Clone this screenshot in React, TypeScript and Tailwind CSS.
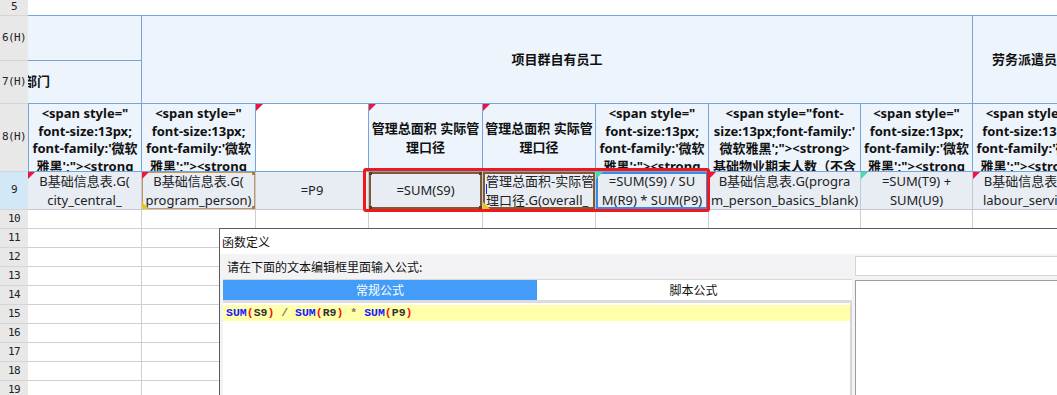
import clsx from "clsx";
import type { ReactNode } from "react";

const cellFont = "font-['Noto_Sans','Noto_Sans_CJK_SC',sans-serif]";
const rowNums = [10, 11, 12, 13, 14, 15, 16, 17, 18, 19];

const RowHead = ({ label, active }: { label: string; active?: boolean }) => (
  <div
    className={clsx(
      "flex items-center justify-center border-b border-[#d6d6d6] font-['DejaVu_Sans_Mono',monospace] text-[11px] tracking-[-0.6px] text-[#222]",
      active ? "bg-[#d2e8f6]" : "bg-[#e8e8e8]"
    )}
  >
    {label}
  </div>
);

const Tri = ({ color = "red", pos = "tl" }: { color?: "red" | "green" | "yellow"; pos?: "tl" | "bl" }) => (
  <span
    className={clsx(
      "absolute left-0 h-[7px] w-[7px]",
      pos === "tl" ? "top-0 [clip-path:polygon(0_0,100%_0,0_100%)]" : "bottom-0 [clip-path:polygon(0_0,0_100%,100%_100%)]",
      color === "red" && "bg-[#f01240]",
      color === "green" && "bg-[#3fe0b0]",
      color === "yellow" && "bg-[#f4c20d]"
    )}
  />
);

// row 8: long html headers, bold, clipped by the row height
const HeadCell = ({ lines, tri, first }: { lines: string[]; tri?: boolean; first?: boolean }) => (
  <div
    className={clsx(
      "relative overflow-hidden border-r border-b border-[#74a6db] bg-[#edf4fc]",
      first && "border-l"
    )}
  >
    {tri && <Tri />}
    <div className="flex flex-col items-center pt-[1px] text-[13px] font-bold leading-[17.6px] text-[#111]">
      {lines.map((l, i) => (
        <span key={i} className="whitespace-nowrap">
          {l}
        </span>
      ))}
    </div>
  </div>
);

// row 9 data cells
const DataCell = ({ children, left, extra }: { children: ReactNode; left?: boolean; extra?: ReactNode }) => (
  <div className="relative overflow-hidden border-r border-b border-[#c3c9d3] bg-[#e8edf4]">
    {extra}
    <div
      className={clsx(
        "flex h-full flex-col justify-center text-[13px] leading-[19px] text-[#222]",
        left ? "items-start pl-[3px]" : "items-center"
      )}
    >
      {children}
    </div>
  </div>
);

const Corners = ({ color }: { color: string }) => (
  <>
    <span className={clsx("absolute left-0 top-0 h-[3px] w-[3px]", color)} />
    <span className={clsx("absolute right-0 top-0 h-[3px] w-[3px]", color)} />
    <span className={clsx("absolute bottom-0 left-0 h-[3px] w-[3px]", color)} />
    <span className={clsx("absolute bottom-0 right-0 h-[3px] w-[3px]", color)} />
  </>
);

const Line = ({ t }: { t: string }) => <span className="whitespace-nowrap">{t}</span>;

const spanHead = ['<span style="', "font-size:13px;", "font-family:'微软", "雅黑';\"><strong"];

export default function App() {
  return (
    <div className={clsx("relative h-[395px] w-[1057px] overflow-hidden bg-white", cellFont)}>
      <div className="grid grid-cols-[28px_114px_114px_113px_114px_113px_113px_152px_112px_113px] grid-rows-[16px_45px_43px_68px_38px_repeat(10,19px)]">
        {/* row 5 */}
        <RowHead label="5" />
        <div className="col-span-9 border-b border-[#74a6db] bg-white" />

        {/* rows 6-7 */}
        <RowHead label="6(H)" />
        <div className="border-r border-b border-[#74a6db] bg-[#edf4fc]" />
        <div className="col-span-7 row-span-2 flex items-center justify-center border-r border-b border-[#74a6db] bg-[#edf4fc] text-[13px] font-bold text-[#111]">
          项目群自有员工
        </div>
        <div className="row-span-2 flex items-center overflow-hidden border-b border-[#74a6db] bg-[#edf4fc] pl-[19px] text-[13px] font-bold whitespace-nowrap text-[#111]">
          劳务派遣员工
        </div>
        <RowHead label="7(H)" />
        <div className="flex items-center overflow-hidden border-r border-b border-[#74a6db] bg-[#edf4fc] text-[13px] font-bold text-[#111]">
          <span className="-ml-[4px] whitespace-nowrap">部门</span>
        </div>

        {/* row 8 */}
        <RowHead label="8(H)" />
        <HeadCell lines={spanHead} first />
        <HeadCell lines={spanHead} />
        <div className="relative border-r border-b border-[#74a6db] bg-white">
          <Tri />
        </div>
        <div className="relative flex flex-col items-center justify-center border-r border-b border-[#74a6db] bg-[#edf4fc] text-[13px] font-bold leading-[19px] text-[#111]">
          <Tri />
          <span className="whitespace-nowrap">管理总面积 实际管</span>
          <span>理口径</span>
        </div>
        <div className="relative flex flex-col items-center justify-center border-r border-b border-[#74a6db] bg-[#edf4fc] text-[13px] font-bold leading-[19px] text-[#111]">
          <Tri />
          <span className="whitespace-nowrap">管理总面积 实际管</span>
          <span>理口径</span>
        </div>
        <HeadCell lines={spanHead} />
        <HeadCell
          lines={['<span style="font-', "size:13px;font-family:'", "微软雅黑';\"><strong>", "基础物业期末人数（不含"]}
        />
        <HeadCell lines={spanHead} />
        <HeadCell lines={spanHead} />

        {/* row 9 */}
        <RowHead label="9" active />
        <DataCell extra={<Tri />}>
          <Line t="B基础信息表.G(" />
          <Line t="city_central_" />
        </DataCell>
        <DataCell
          extra={
            <>
              <span className="absolute inset-0 border border-[#c8965c]" />
              <Corners color="bg-[#b07a40]" />
              <Tri />
              <Tri color="yellow" pos="bl" />
            </>
          }
        >
          <Line t="B基础信息表.G(" />
          <Line t="program_person)" />
        </DataCell>
        <DataCell>
          <Line t="=P9" />
        </DataCell>
        <DataCell
          extra={
            <>
              <span className="absolute inset-0 border-2 border-[#7d5a38]" />
              <Corners color="bg-[#5a3c1e]" />
            </>
          }
        >
          <Line t="=SUM(S9)" />
        </DataCell>
        <DataCell
          left
          extra={
            <>
              <span className="absolute inset-0 border-2 border-[#7d5a38]" />
              <span className="absolute left-[3px] top-[12px] h-[10px] w-[1px] bg-[#1030e0]" />
              <Tri color="yellow" pos="bl" />
            </>
          }
        >
          <Line t="管理总面积-实际管" />
          <Line t="理口径.G(overall_" />
        </DataCell>
        <DataCell
          extra={
            <>
              <span className="absolute inset-0 border-2 border-[#3a8ae8]" />
              <Tri color="green" />
            </>
          }
        >
          <Line t="=SUM(S9) / SU" />
          <Line t="M(R9) * SUM(P9)" />
        </DataCell>
        <DataCell extra={<Tri />}>
          <Line t="B基础信息表.G(progra" />
          <Line t="m_person_basics_blank)" />
        </DataCell>
        <DataCell extra={<Tri color="green" />}>
          <Line t="=SUM(T9) +" />
          <Line t="SUM(U9)" />
        </DataCell>
        <DataCell extra={<Tri />}>
          <Line t="B基础信息表.G(" />
          <Line t="labour_service)" />
        </DataCell>

        {/* rows 10-19 */}
        {rowNums.map((n) => (
          <div key={n} className="contents">
            <RowHead label={String(n)} />
            {Array.from({ length: 9 }).map((_, i) => (
              <div key={i} className="border-r border-b border-[#cfcfcf] bg-white" />
            ))}
          </div>
        ))}
      </div>

      {/* selection annotation */}
      <div className="pointer-events-none absolute left-[363px] top-[168px] h-[44px] w-[347px] rounded-[3px] border-[3px] border-[#f01818]" />

      {/* function dialog */}
      <div className="absolute left-[219px] top-[228px] flex h-[200px] w-[860px] flex-col border-l border-t border-[#5c5c5c] bg-white font-['Noto_Sans_CJK_SC',sans-serif] text-[12px] text-[#111]">
        <div className="flex h-[25px] items-center pl-[2px]">函数定义</div>
        <div className="flex flex-1 bg-[#f3f3f5] pl-[3px]">
          <div className="flex w-[629px] flex-col">
            <div className="flex h-[25px] items-center pl-[4px]">请在下面的文本编辑框里面输入公式:</div>
            <div className="flex h-[21px] border-t border-[#d8d8d8] bg-white">
              <div className="flex w-[314px] items-center justify-center bg-[#439cf8] text-white">常规公式</div>
              <div className="flex w-[313px] items-center justify-center">脚本公式</div>
            </div>
            <div className="h-[3px] bg-[#dbdbe0]" />
            <div className="flex-1 border-r-2 border-[#d6d6d6] bg-white pt-[2px]">
              <div className="flex h-[16px] items-center bg-[#ffffaa] pl-[3px] font-['Liberation_Mono',monospace] text-[11.5px] font-semibold whitespace-pre">
                <span className="text-[#1a1aff]">SUM</span>
                <span className="text-[#f01818]">(</span>
                <span className="text-[#333]">S9</span>
                <span className="text-[#f01818]">)</span>
                <span className="text-[#8a7560]"> / </span>
                <span className="text-[#1a1aff]">SUM</span>
                <span className="text-[#f01818]">(</span>
                <span className="text-[#333]">R9</span>
                <span className="text-[#f01818]">)</span>
                <span className="text-[#8a7560]"> * </span>
                <span className="text-[#1a1aff]">SUM</span>
                <span className="text-[#f01818]">(</span>
                <span className="text-[#333]">P9</span>
                <span className="text-[#f01818]">)</span>
              </div>
            </div>
          </div>
          <div className="ml-[3px] flex flex-1 flex-col">
            <div className="mt-[2px] h-[20px] border border-[#d4d4d4] bg-white" />
            <div className="mt-[4px] flex-1 border-t border-l border-[#9c9c9c] bg-white" />
          </div>
        </div>
      </div>
    </div>
  );
}
